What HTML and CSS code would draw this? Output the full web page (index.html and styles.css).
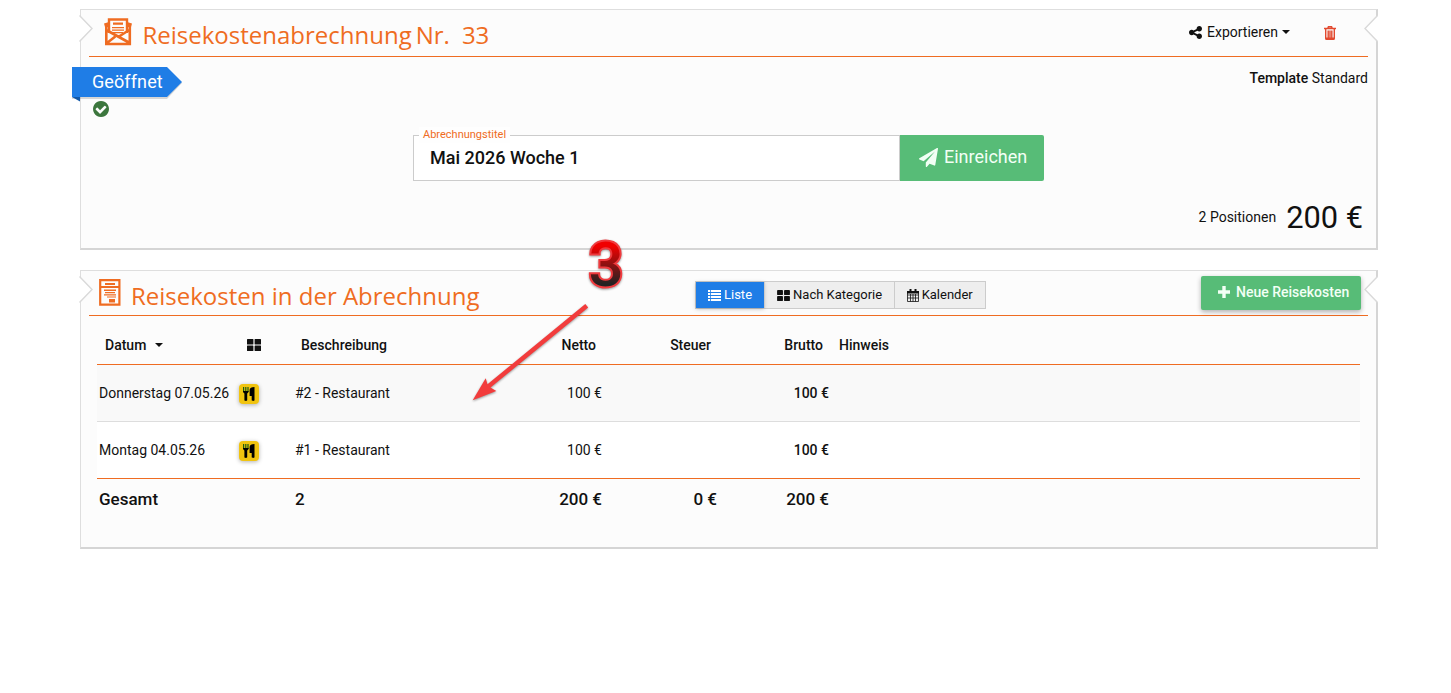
FILE: index.html
```html
<!DOCTYPE html>
<html lang="de">
    <head>
        <meta charset="UTF-8" />
        <meta name="viewport" content="width=device-width, initial-scale=1.0" />
        <title>Reisekostenabrechnung Nr. 33</title>
        <link rel="stylesheet" href="styles.css">
    </head>
    <body>
        <svg class="sprite" width="0" height="0">
            <symbol id="th-large" viewBox="0 0 14 12">
                <rect width="6.4" height="5.4" rx="0.5" />
                <rect x="7.6" width="6.4" height="5.4" rx="0.5" />
                <rect y="6.6" width="6.4" height="5.4" rx="0.5" />
                <rect x="7.6" y="6.6" width="6.4" height="5.4" rx="0.5" />
            </symbol>
            <symbol id="cutlery" viewBox="0 0 12 14">
                <path class="tines" d="M0 0h1.2v5H0zM2.2 0h1.2v5H2.2zM4.4 0h1.2v5H4.4z" />
                <path d="M0 4h5.6c0 1.4-.6 2-1.4 2.4V13c0 1.2-2.8 1.2-2.8 0V6.4C.6 6 0 5.4 0 4z" />
                <path d="M11.5 0v13c0 1.2-2.8 1.2-2.8 0V9H6.6V3C6.6 1 8.5 0 11.5 0z" />
            </symbol>
            <symbol id="notch-left" viewBox="0 0 14 28">
                <path class="cut" d="M0 .5L13 13.5 0 26.5z" />
                <path class="edge" d="M.5 .5L13 13.5 .5 26.5" />
            </symbol>
            <symbol id="notch-right" viewBox="0 0 14 28">
                <path class="cut" d="M14 .5L1 13.5 14 26.5z" />
                <path class="edge" d="M13.5 .5L1 13.5 13.5 26.5" />
            </symbol>
        </svg>
        <main>
            <section class="card report">
                <svg class="notch left"><use href="#notch-left" /></svg>
                <svg class="notch right"><use href="#notch-right" /></svg>
                <header class="card-header">
                    <svg class="envelope" width="28" height="28" viewBox="0 0 28 28">
                        <path d="M5 15V1.5h18V15" fill="none" stroke="currentColor" stroke-width="2.4" />
                        <path d="M9 4.5h10v2.2H9zM8 9h12v1.3H8zM8 11.5h12v1.3H8zM9 14h10v1.3H9z" />
                        <path d="M2.3 6v20h23.5V6M2.3 12l23.5 13M2.3 25.5l9-7M26 11.5l-11 7" fill="none" stroke="currentColor" stroke-width="2.6" />
                        <path d="M0 5.5l5-1.5v5H1zM28 5.5l-5-1.5v5h4z" />
                    </svg>
                    <h1><span>Reisekostenabrechnung</span><span class="nr">Nr.</span><span>33</span></h1>
                    <div class="actions">
                        <a class="export">
                            <svg width="13" height="13" viewBox="128 128 1536 1536"><path d="M1344 1024q133 0 226.5 93.5t93.5 226.5-93.5 226.5-226.5 93.5-226.5-93.5-93.5-226.5q0-12 2-34l-360-180q-92 86-218 86-133 0-226.5-93.5t-93.5-226.5 93.5-226.5 226.5-93.5q126 0 218 86l360-180q-2-22-2-34 0-133 93.5-226.5t226.5-93.5 226.5 93.5 93.5 226.5-93.5 226.5-226.5 93.5q-126 0-218-86l-360 180q2 22 2 34t-2 34l360 180q92-86 218-86z" /></svg>
                            <span>Exportieren</span>
                            <i class="caret"></i>
                        </a>
                        <svg class="trash" width="12" height="14" viewBox="0 0 12 14">
                            <path d="M0 2.5h12M3.7 2.5l.7-1.7h3.2l.7 1.700M1.700 3v9.500q0 .8.800.8h7q.8 0 .8-.8V3M4.200 4.500v7.500M6 4.500v7.500M7.800 4.500v7.500M2 12.300h8" fill="none" stroke="currentColor" stroke-width="1.4" />
                        </svg>
                    </div>
                </header>
                <div class="status-row">
                    <div class="ribbon">
                        <svg class="ribbon-shape" width="112" height="37" viewBox="0 0 112 37">
                            <path class="shade" d="M0 1h95l15 15-15 16H0z" />
                            <path class="fold" d="M0 30h8v4.5z" />
                            <path class="front" d="M0 0h95l15 15-15 15H0z" />
                        </svg>
                        <span>Geöffnet</span>
                    </div>
                    <div class="template"><b>Template</b> Standard</div>
                </div>
                <svg class="check" width="16" height="16" viewBox="128 128 1536 1536"><path d="M1412 734q0-28-18-46l-91-90q-19-19-45-19t-45 19l-408 407-226-226q-19-19-45-19t-45 19l-91 90q-18 18-18 46 0 27 18 45l362 362q19 19 45 19 27 0 46-19l543-543q18-18 18-45zm252 162q0 209-103 385.5t-279.5 279.5-385.5 103-385.5-103-279.5-279.5-103-385.5 103-385.5 279.5-279.5 385.5-103 385.5 103 279.5 279.5 103 385.5z" /></svg>
                <div class="title-form">
                    <div class="field">
                        <label>Abrechnungstitel</label>
                        <span>Mai 2026 Woche 1</span>
                    </div>
                    <div class="submit">
                        <svg width="19" height="19" viewBox="0 0 1792 1792"><path d="M1764 11q33 24 27 64l-256 1536q-5 29-32 45-14 8-31 8-11 0-24-5l-453-185-242 295q-18 23-49 23-13 0-22-4-19-7-30.5-23.5t-11.5-36.5v-349l864-1059-1069 925-395-162q-37-14-40-55-2-40 32-59l1664-960q15-9 32-9 20 0 36 11z" /></svg>
                        <span>Einreichen</span>
                    </div>
                </div>
                <div class="sum"><span>2 Positionen</span><span class="amount">200 €</span></div>
            </section>

            <section class="card costs">
                <svg class="notch left"><use href="#notch-left" /></svg>
                <svg class="notch right"><use href="#notch-right" /></svg>
                <header class="card-header">
                    <svg class="receipt" width="22" height="27" viewBox="0 0 22 27">
                        <path d="M1.2 1.2h19.2v24.5H1.2zM1.2 8h19.2" fill="none" stroke="currentColor" stroke-width="2.2" />
                        <path d="M6 4h10v2H6zM5 10.5h12V12H5zM6 13h10v1.2H6zM5 15.2h12v1.2H5zM8 17.5h9v1H8zM10 20h6v3.5h-6z" />
                    </svg>
                    <h2>Reisekosten in der Abrechnung</h2>
                    <div class="tabs">
                        <div class="tab active">
                            <svg width="13" height="11" viewBox="0 0 13 11"><path d="M0 0h2.2v2H0zM3 0h10v2H3zM0 3h2.2v2H0zM3 3h10v2H3zM0 6h2.2v2H0zM3 6h10v2H3zM0 9h2.2v2H0zM3 9h10v2H3z" /></svg>
                            <span>Liste</span>
                        </div>
                        <div class="tab">
                            <svg width="13" height="11"><use href="#th-large" /></svg>
                            <span>Nach Kategorie</span>
                        </div>
                        <div class="tab">
                            <svg width="12" height="13" viewBox="0 0 12 13">
                                <path d="M.5 2.5h11v10H.5zM.5 6h11M.5 9h11M3.5 5v7.5M6 5v7.5M8.5 5v7.5" fill="none" stroke="currentColor" stroke-width=".8" />
                                <path d="M0 2h12v2.5H0zM2.5 0h2v4h-2zM7.5 0h2v4h-2z" />
                            </svg>
                            <span>Kalender</span>
                        </div>
                    </div>
                    <div class="new-cost">
                        <svg width="12" height="12" viewBox="0 0 12 12"><path d="M4.3 0h3.4v4.3H12v3.4H7.7V12H4.3V7.7H0V4.3h4.3z" /></svg>
                        <span>Neue Reisekosten</span>
                    </div>
                </header>
                <table>
                    <colgroup>
                        <col class="c-date">
                        <col class="c-cat">
                        <col class="c-desc">
                        <col class="c-net">
                        <col class="c-tax">
                        <col class="c-gross">
                        <col>
                    </colgroup>
                    <thead>
                        <tr>
                            <th>Datum <i class="caret"></i></th>
                            <th><svg class="cat-head" width="14" height="12"><use href="#th-large" /></svg></th>
                            <th>Beschreibung</th>
                            <th class="num">Netto</th>
                            <th class="num">Steuer</th>
                            <th class="num">Brutto</th>
                            <th>Hinweis</th>
                        </tr>
                    </thead>
                    <tbody>
                        <tr>
                            <td>Donnerstag 07.05.26</td>
                            <td><div class="badge"><svg width="12" height="14"><use href="#cutlery" /></svg></div></td>
                            <td>#2 - Restaurant</td>
                            <td class="num">100 €</td>
                            <td></td>
                            <td class="num gross">100 €</td>
                            <td></td>
                        </tr>
                        <tr>
                            <td>Montag 04.05.26</td>
                            <td><div class="badge"><svg width="12" height="14"><use href="#cutlery" /></svg></div></td>
                            <td>#1 - Restaurant</td>
                            <td class="num">100 €</td>
                            <td></td>
                            <td class="num gross">100 €</td>
                            <td></td>
                        </tr>
                    </tbody>
                    <tfoot>
                        <tr>
                            <td>Gesamt</td>
                            <td></td>
                            <td>2</td>
                            <td class="num">200 €</td>
                            <td class="num">0 €</td>
                            <td class="num">200 €</td>
                            <td></td>
                        </tr>
                    </tfoot>
                </table>
            </section>
        </main>
        <svg class="step" width="180" height="180" viewBox="0 0 180 180">
            <defs>
                <linearGradient id="step-fill" gradientUnits="userSpaceOnUse" x1="0" y1="12" x2="0" y2="56">
                    <stop offset="0.1" stop-color="#f00000" />
                    <stop offset="0.95" stop-color="#222" />
                </linearGradient>
            </defs>
            <path class="arrow" d="M125.3 74L128.2 77.5 30.5 157.5 36.3 161 12.7 170.3 25.7 148.3 27.5 154.2z" />
            <text x="128.5" y="56">3</text>
        </svg>
    </body>
</html>
```

FILE: styles.css
```css
body {
    margin: 0;
    background: #fff;
    color: #111;
    font-family: Roboto, "Liberation Sans", sans-serif;
    font-size: 14px;
    line-height: 20px;
}
svg {
    display: block;
    flex: none;
    fill: currentColor;
}
.sprite {
    position: absolute;
}
main {
    width: 1298px;
    padding: 9px 0 0 80px;
}
.card {
    position: relative;
    box-sizing: border-box;
    background: #fcfcfc;
    border: 1px solid #dedede;
    border-right: 2px solid #d5d5d5;
    border-bottom: 2px solid #d5d5d5;
    padding: 0 8px;
}
.report {
    height: 241px;
    margin-bottom: 20px;
}
.costs {
    height: 279px;
}
.notch {
    position: absolute;
    top: 5px;
    width: 14px;
    height: 28px;
}
.notch.left {
    left: -2px;
}
.notch.right {
    right: -2px;
}
.cut {
    fill: #fff;
}
.edge {
    fill: none;
    stroke: #d9d9d9;
    stroke-width: 1.4;
}
.card-header {
    display: flex;
    box-sizing: border-box;
    height: 47px;
    border-bottom: 1px solid #ef6c22;
    color: #ef6c22;
}
.costs .card-header {
    height: 45px;
}
h1,
h2 {
    margin: 0;
    font-family: "Open Sans", sans-serif;
    font-size: 24px;
    font-weight: 400;
    line-height: 32px;
    white-space: nowrap;
}
h1 {
    display: flex;
    margin: 9px 0 0 10.5px;
}
h1 .nr {
    margin: 0 12px 0 4px;
}
h2 {
    width: 564px;
    margin: 9px 0 0 10px;
}
.envelope {
    margin: 8px 0 0 15px;
}
.receipt {
    margin: 8px 0 0 10px;
}
.actions {
    display: flex;
    margin: 12px 32px 0 auto;
    color: #111;
}
.export {
    display: flex;
    align-items: center;
    height: 20px;
}
.export span {
    margin-left: 5px;
}
.caret {
    display: inline-block;
    border-top: 4px solid #111;
    border-left: 4px solid transparent;
    border-right: 4px solid transparent;
}
.export .caret {
    margin-left: 4px;
}
.trash {
    margin: 4px 0 0 34px;
    color: #e2492f;
}
.status-row {
    display: flex;
    justify-content: space-between;
    height: 44px;
}
.ribbon {
    position: relative;
    width: 110px;
    height: 30px;
    margin: 10px 0 0 -17px;
    color: #fff;
    font-size: 18px;
    letter-spacing: 0.1px;
    line-height: 30px;
}
.ribbon span {
    position: relative;
    padding-left: 20px;
}
.ribbon-shape {
    position: absolute;
    top: 0;
    left: 0;
}
.front {
    fill: #1f7de6;
}
.fold {
    fill: #1259aa;
}
.shade {
    fill: rgba(0, 0, 0, 0.15);
}
.template {
    padding-top: 11px;
}
.template b {
    font-weight: 500;
}
.check {
    margin-left: 4px;
    color: #3c763d;
}
.title-form {
    display: flex;
    width: 631px;
    height: 46px;
    margin: 18px 0 0 324px;
}
.field {
    position: relative;
    box-sizing: border-box;
    width: 486px;
    padding-left: 16px;
    background: #fff;
    border: 1px solid #ccc;
    font-size: 18px;
    font-weight: 500;
    line-height: 44px;
    width: 487px;
}
.field label {
    position: absolute;
    top: -9px;
    left: 5px;
    padding: 0 4px;
    background: #fefefe;
    color: #ef6c22;
    font-size: 11px;
    font-weight: 400;
    line-height: 16px;
}
.submit {
    display: flex;
    align-items: center;
    box-sizing: border-box;
    width: 144px;
    padding-left: 19px;
    background: #57bc77;
    border-radius: 0 2px 2px 0;
    color: #f2fff5;
    font-size: 18px;
}
.submit svg {
    margin-top: -1px;
}
.submit span {
    margin: -2px 0 0 6px;
}
.sum {
    display: flex;
    align-items: center;
    justify-content: flex-end;
    height: 40px;
    margin: 16px 5px 0 0;
}
.amount {
    margin: 2px 0 0 10px;
    font-size: 30.8px;
}
.tabs {
    display: flex;
    box-sizing: border-box;
    height: 28px;
    margin-top: 10px;
    border: 1px solid #ccc;
    background: #eee;
    color: #111;
    font-size: 13px;
}
.tab {
    display: flex;
    align-items: center;
    padding: 0 12px;
    border-left: 1px solid #ccc;
}
.tab:last-child {
    padding-left: 11.5px;
}
.tab span {
    margin-left: 3px;
}
.tab.active {
    border-left: 0;
    background: #1f7de6;
    color: #fff;
    box-shadow: 0 1px 4px rgba(0, 0, 0, 0.25);
}
.new-cost {
    display: flex;
    align-items: center;
    box-sizing: border-box;
    width: 160px;
    height: 34px;
    margin: 5px 7px 0 auto;
    padding: 0 0 2px 17px;
    background: #57bc77;
    border-radius: 2px;
    box-shadow: 0 2px 5px rgba(0, 0, 0, 0.3);
    color: #f2fff5;
    font-weight: 500;
}
.new-cost span {
    margin-left: 6px;
}
table {
    width: 1263px;
    margin-left: 8px;
    border-spacing: 0;
    table-layout: fixed;
}
.c-date {
    width: 140px;
}
.c-cat {
    width: 56px;
}
.c-desc {
    width: 195px;
}
.c-net {
    width: 116px;
}
.c-tax {
    width: 115px;
}
.c-gross {
    width: 112px;
}
th {
    box-sizing: border-box;
    height: 49px;
    padding: 9px 8px 0;
    border-bottom: 1px solid #ef6c22;
    font-weight: 500;
    text-align: left;
}
th .caret {
    margin: 0 0 3px 5px;
}
.cat-head {
    margin-left: 2px;
}
td {
    box-sizing: border-box;
    height: 57px;
    padding: 0 2px;
    border-bottom: 1px solid #ddd;
    white-space: nowrap;
}
.num {
    text-align: right;
}
.gross {
    font-weight: 500;
}
tbody tr {
    background: #fff;
}
tbody tr:first-child {
    background: #f9f9f9;
}
tbody tr:last-child td {
    border-bottom-color: #ef6c22;
}
tfoot td {
    height: 40px;
    border: 0;
    font-size: 17px;
    font-weight: 500;
}
.badge {
    display: flex;
    align-items: center;
    justify-content: center;
    width: 20px;
    height: 20px;
    margin-top: 2px;
    background: #f1c40f;
    border-radius: 4px;
    box-shadow: 0 1px 4px rgba(0, 0, 0, 0.3);
    color: #000;
}
.tines {
    fill: #1d5c12;
}
/* step marker lies over both cards */
.step {
    position: absolute;
    top: 230px;
    left: 460px;
    filter: drop-shadow(0 1px 1px rgba(0, 0, 0, 0.4));
}
.arrow {
    fill: #f23c3c;
}
.step text {
    fill: url(#step-fill);
    stroke: #f03a3e;
    stroke-width: 4;
    paint-order: stroke;
    font-size: 62px;
    font-weight: 500;
}
```
